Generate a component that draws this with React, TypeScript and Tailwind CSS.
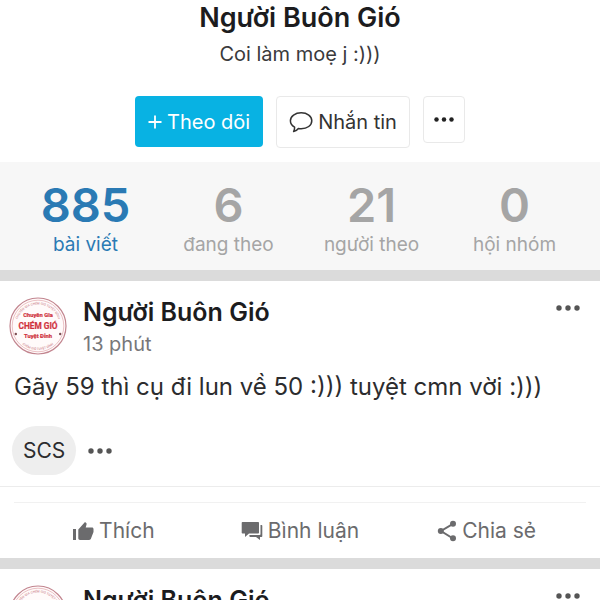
import React, { useState } from 'react';

const STATS = [
  { value: 885, label: 'bài viết' },
  { value: 6, label: 'đang theo' },
  { value: 21, label: 'người theo' },
  { value: 0, label: 'hội nhóm' },
];

const POSTS = [
  { id: 'p1', author: 'Người Buôn Gió', time: '13 phút', text: 'Gãy 59 thì cụ đi lun về 50 :))) tuyệt cmn vời :)))', tag: 'SCS' },
  { id: 'p2', author: 'Người Buôn Gió', time: '13 phút', text: '', tag: '' },
];

function Dots({ className }: { className: string }) {
  return (
    <svg viewBox="0 0 24 6" fill="currentColor" className={className} aria-hidden="true">
      <circle cx="3" cy="3" r="2.7" />
      <circle cx="12" cy="3" r="2.7" />
      <circle cx="21" cy="3" r="2.7" />
    </svg>
  );
}

function PlusIcon() {
  return (
    <svg viewBox="0 0 14 14" className="w-[14px] h-[14px]" stroke="currentColor" strokeWidth="1.8" aria-hidden="true">
      <path d="M7 0.5V13.5M0.5 7H13.5" />
    </svg>
  );
}

function BubbleIcon() {
  return (
    <svg viewBox="0 0 24 22" className="w-6 h-[22px]" fill="none" stroke="currentColor" strokeWidth="1.5" strokeLinejoin="round" aria-hidden="true">
      <path d="M12.200 1.800C6.200 1.800 1.400 5.300 1.400 9.800c0 2.700 1.700 5 4.200 6.400.1 1.600-.3 3-1 4.300 2.200-.5 3.700-1.500 4.800-3 .9.200 1.800.300 2.800.300 6 0 10.600-3.500 10.600-8s-4.600-8-10.600-8z" />
    </svg>
  );
}

function LikeIcon() {
  return (
    <svg viewBox="0 0 22 20" className="w-[22px] h-5" fill="currentColor" aria-hidden="true">
      <path d="M1 8h3v11H1zM6.300 8.600 13 1l1.200.9c.4.400.5.800.4 1.300L13.700 6.500h6.300c.9 0 1.500.7 1.500 1.500v3l-2.600 6.800c-.3.700-.9 1.200-1.700 1.200H8c-1 0-1.700-.8-1.700-1.700z" />
    </svg>
  );
}

function CommentIcon() {
  return (
    <svg viewBox="0 0 22 20" className="w-[22px] h-5" fill="currentColor" aria-hidden="true">
      <path d="M1.500 1h15.700c.5 0 .8.3.8.8v9.900c0 .5-.3.8-.8.8H8l-4 3.500v-3.500H1.500c-.5 0-.8-.3-.8-.8V1.800c0-.5.3-.8.8-.8z" />
      <path d="M19.500 4h1c.5 0 .8.3.8.8v10.400c0 .5-.3.8-.8.8H19v3l-4-3H9.200c-.5 0-.8-.3-.8-.8v-1.200h10.300c.5 0 .8-.3.8-.8z" />
    </svg>
  );
}

function ShareIcon() {
  return (
    <svg viewBox="0 0 20 22" className="w-5 h-[22px]" fill="currentColor" aria-hidden="true">
      <path d="M16 3.800 4 11l12 7.500" fill="none" stroke="currentColor" strokeWidth="2" />
      <circle cx="16" cy="3.800" r="3" />
      <circle cx="3.800" cy="11" r="3" />
      <circle cx="16" cy="18.300" r="3" />
    </svg>
  );
}

// Round stamp, id keeps the text paths unique per post
function StampAvatar({ id }: { id: string }) {
  return (
    <svg viewBox="0 0 58 58" className="w-[58px] h-[58px] shrink-0" fontFamily="Roboto, sans-serif" textAnchor="middle" role="img" aria-label="Chém Gió">
      <defs>
        <path id={`${id}-top`} d="M7.500 29a21.500 21.500 0 0 1 43 0" />
        <path id={`${id}-bottom`} d="M5 29a24 24 0 0 0 48 0" />
      </defs>
      <circle cx="29" cy="29" r="28" fill="#fffafa" stroke="#c2858f" strokeWidth="1.200" />
      <circle cx="29" cy="29" r="25.800" fill="none" stroke="#e2a9ae" strokeWidth="0.700" />
      <g fontSize="3.200" fontWeight="500" fill="#d08a92">
        <text><textPath href={`#${id}-top`} startOffset="50%">CHUYÊN GIA CHÉM GIÓ TUYỆT ĐỈNH</textPath></text>
        <text><textPath href={`#${id}-bottom`} startOffset="50%">CHÉM GIÓ TUYỆT ĐỈNH</textPath></text>
      </g>
      <g fill="#d0333e" stroke="#d0333e" strokeWidth="0.200" fontWeight="700">
        <text x="29" y="20" fontSize="5.800">Chuyên Gia</text>
        <text x="29" y="32" fontSize="8.300">CHÉM GIÓ</text>
        <text x="29" y="41" fontSize="5.800">Tuyệt Đỉnh</text>
      </g>
      <circle cx="6.800" cy="37" r="1.200" fill="#7d4c52" />
      <circle cx="51.200" cy="37" r="1.200" fill="#7d4c52" />
    </svg>
  );
}

function Post({ post }: { post: (typeof POSTS)[number] }) {
  const [liked, setLiked] = useState(false);

  return (
    <article className="bg-white border-b-[11px] border-[#dbdbdb]">
      <header className="flex items-start pt-4 pl-[9px] pr-5">
        <StampAvatar id={post.id} />
        <div className="flex-1 min-w-0 ml-4">
          <h2 className="text-[25px] leading-[30px] font-semibold text-[#1c1c1e]">{post.author}</h2>
          <p className="mt-1 text-[20px] leading-[26px] text-[#77777a]">{post.time}</p>
        </div>
        <button type="button" aria-label="Tùy chọn" className="mt-2 text-[#555]">
          <Dots className="w-6 h-[6px]" />
        </button>
      </header>

      {post.text && <p className="px-[14px] pt-[15px] text-[24px] leading-[30px] text-[#2c2c2e]">{post.text}</p>}

      {post.tag && (
        <div className="flex items-center gap-3 px-3 pt-6 pb-[11px] border-b border-[#ececec]">
          <a href="#scs" className="flex items-center justify-center h-[49px] px-[11px] rounded-full bg-[#eee] text-[21px] text-[#2c2c2e]">
            {post.tag}
          </a>
          <button type="button" aria-label="Xem thêm" className="text-[#555]">
            <Dots className="w-6 h-[6px]" />
          </button>
        </div>
      )}

      <footer className="mx-[14px] mt-[15px] px-[6px] border-t border-[#f1f1f1] grid grid-cols-3 h-14 text-[21px] text-[#6b6b6d]">
        <button type="button" onClick={() => setLiked(!liked)} aria-pressed={liked} className="flex items-center justify-center gap-[5px]">
          <LikeIcon /> Thích
        </button>
        <button type="button" className="flex items-center justify-center gap-[5px]">
          <CommentIcon /> Bình luận
        </button>
        <button type="button" className="flex items-center justify-center gap-[5px]">
          <ShareIcon /> Chia sẻ
        </button>
      </footer>
    </article>
  );
}

export default function App() {
  return (
    <main className="h-screen overflow-hidden bg-white font-['Inter','Noto_Sans',sans-serif]">
      <section className="flex flex-col items-center">
        <h1 className="text-[27px] leading-9 font-semibold text-[#1c1c1e]">Người Buôn Gió</h1>
        <p className="mt-[2px] text-[20px] leading-8 text-[#3a3a3c]">Coi làm moẹ j :)))</p>
        <div className="flex items-start gap-[13px] mt-[26px] text-[20px]">
          <button type="button" className="flex items-center justify-center gap-[5px] h-[51px] px-[13px] rounded-[4px] bg-[#08b2e3] text-white">
            <PlusIcon /> Theo dõi
          </button>
          <button type="button" className="flex items-center justify-center gap-[5px] h-[52px] px-3 rounded-[4px] border border-[#e9e9e9] text-[#333]">
            <BubbleIcon /> Nhắn tin
          </button>
          <button type="button" aria-label="Thêm" className="flex items-center justify-center w-[42px] h-[47px] rounded-[4px] border border-[#e9e9e9] text-[#222]">
            <Dots className="w-5 h-[5px]" />
          </button>
        </div>
      </section>

      <section className="grid grid-cols-4 mt-[14px] px-[14px] pt-4 pb-3 bg-[#f7f7f7] border-b-[11px] border-[#dbdbdb]">
        {STATS.map((stat, i) => (
          <a key={stat.label} href="#stats" className={`flex flex-col items-center ${i === 0 ? 'text-[#2a7ab4]' : 'text-[#a5a5a5]'}`}>
            <span className="text-[47px] leading-[54px] font-semibold">{stat.value}</span>
            <span className="text-[19px] leading-[26px]">{stat.label}</span>
          </a>
        ))}
      </section>

      {POSTS.map((post) => (
        <Post key={post.id} post={post} />
      ))}
    </main>
  );
}
